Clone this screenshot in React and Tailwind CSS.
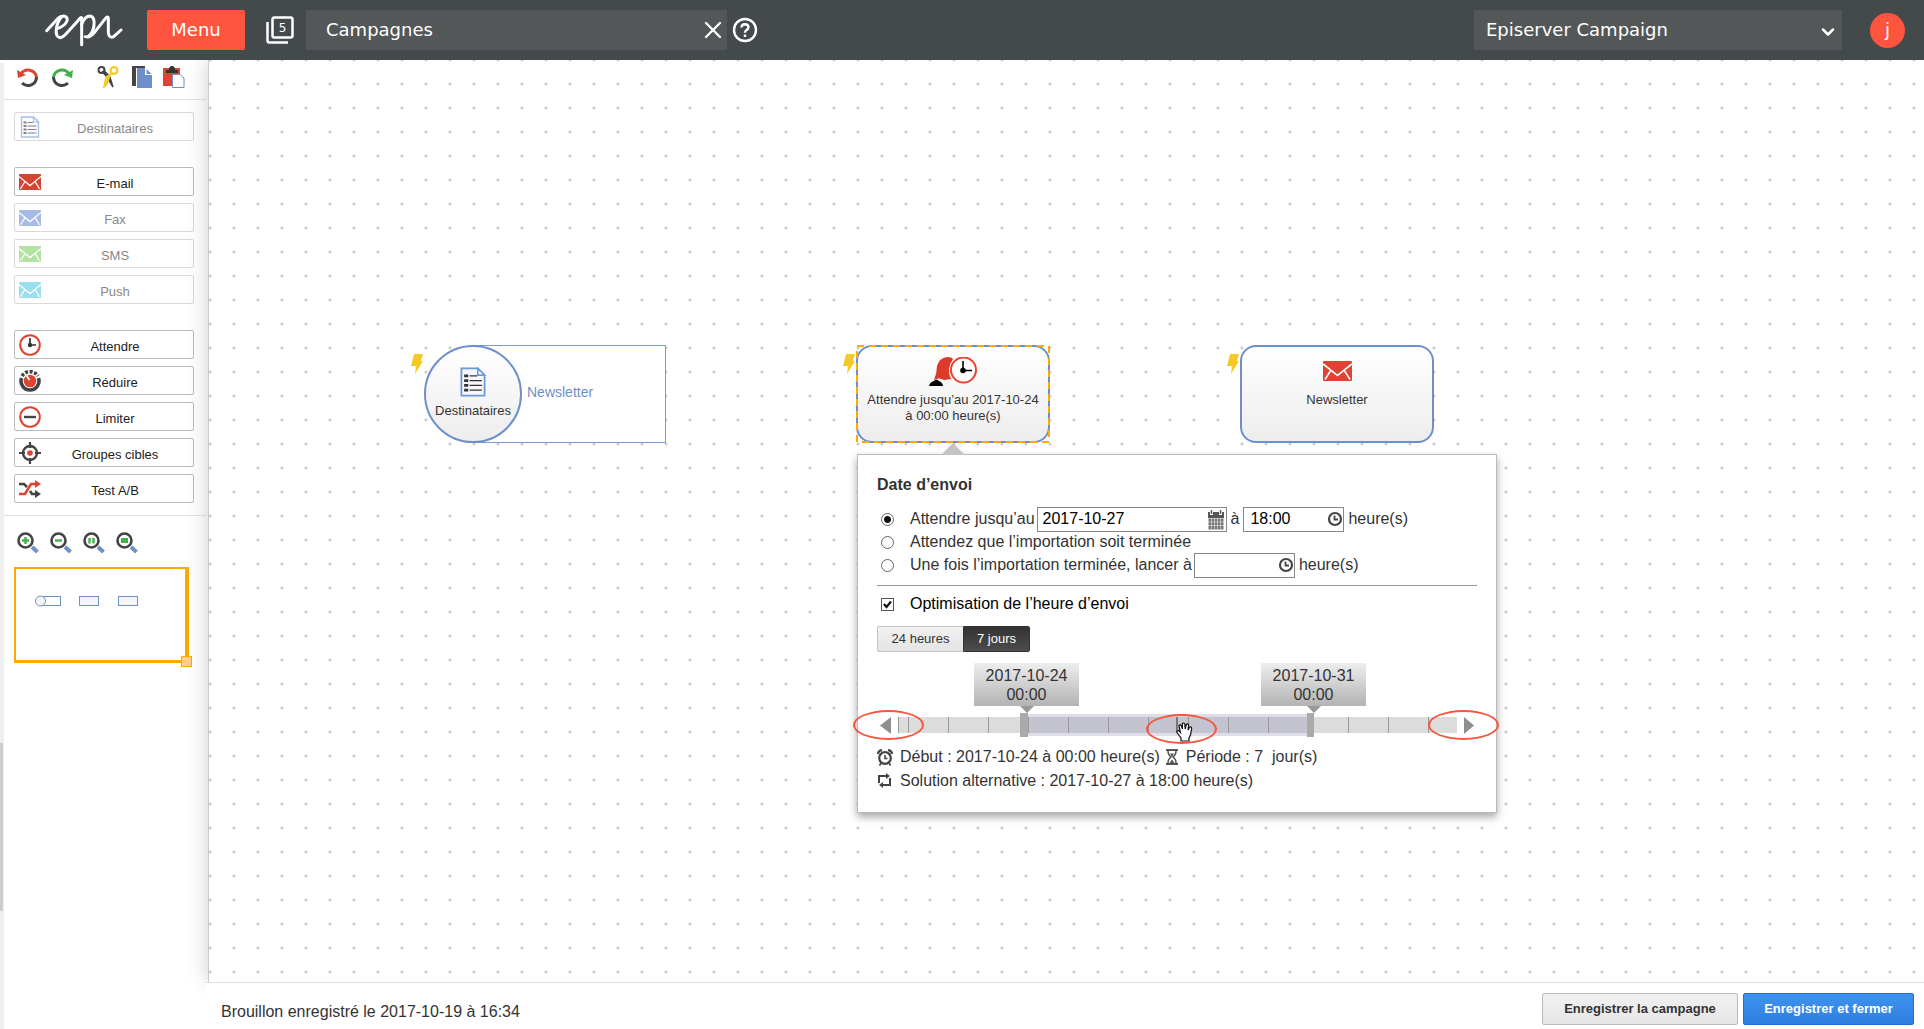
import { useState } from "react";
import { ChevronDown, X } from "lucide-react";

const TICKS = Array.from({ length: 14 }, (_, i) => 10 + i * 40);
const TRACK_WIDTH = 559;

const Logo = () => (
  <svg width="78" height="36" viewBox="0 0 234 108" fill="none" stroke="#fff" strokeWidth="9" strokeLinecap="round" strokeLinejoin="round">
    <path d="M5 56 L38 20 Q46 12 56 12 Q69 14 66 27 Q60 42 36 50" />
    <path d="M50 14 Q37 30 34 50 Q31 76 46 77 Q54 76 62 67 L99 26 Q107 14 110 18 V98" />
    <path d="M110 38 Q118 12 136 12 Q150 16 147 40 Q145 60 130 74" />
    <path d="M121 74 Q134 78 146 64 L181 20 Q189 10 190 20 V62 Q192 80 206 74 L228 54" />
  </svg>
);

const WindowsIcon = () => (
  <svg width="30" height="30" viewBox="0 0 30 30" fill="none" stroke="#fff" strokeWidth="2.5">
    <rect x="7.5" y="2.5" width="20" height="20" rx="2" />
    <path d="M2.500 7 V25.500 Q2.500 27.500 4.500 27.500 H23" />
    <text x="17.500" y="17" fill="#fff" stroke="none" fontSize="12" textAnchor="middle" fontFamily="DejaVu Sans">5</text>
  </svg>
);

const HelpIcon = () => (
  <svg width="26" height="26" viewBox="0 0 26 26" fill="none" stroke="#fff" strokeWidth="2.4">
    <circle cx="13" cy="13" r="11" />
    <path d="M9.500 10.500 Q9.700 7.200 13 7.200 Q16.500 7.300 16.500 10.300 Q16.300 12 14.500 13 Q13 14 13 15.800" />
    <path d="M13 17.500 V20" />
  </svg>
);

const Undo = () => (
  <svg width="22" height="22" viewBox="0 0 22 22" fill="none" strokeWidth="3">
    <path d="M4 8 A8.500 8.500 0 0 1 19.500 11" stroke="#dd4433" />
    <path d="M19.500 11 A8.500 8.500 0 0 1 5 17" stroke="#444" />
    <path d="M0 4 L9 9 L1 12 Z" fill="#dd4433" />
  </svg>
);

const Redo = () => (
  <svg width="22" height="22" viewBox="0 0 22 22" fill="none" strokeWidth="3">
    <path d="M18 8 A8.500 8.500 0 0 0 2.500 11" stroke="#43b049" />
    <path d="M2.500 11 A8.500 8.500 0 0 0 17 17" stroke="#444" />
    <path d="M22 4 L13 9 L21 12 Z" fill="#43b049" />
  </svg>
);

const Cut = () => (
  <svg width="22" height="22" viewBox="0 0 22 22" fill="none">
    <circle cx="4.500" cy="4" r="3" stroke="#444" strokeWidth="2" />
    <circle cx="17" cy="4.500" r="3.400" stroke="#f5c927" strokeWidth="2.200" />
    <path d="M5.500 6 L10 11 L16 21 L12.500 10 L7 5 Z" fill="#444" stroke="#444" strokeWidth="1.500" />
    <path d="M15 7 L9 11 L7 21 L10 18 L13 9 Z" fill="#f5c927" stroke="#f5c927" strokeWidth="1.500" />
  </svg>
);

const Copy = () => (
  <svg width="22" height="22" viewBox="0 0 22 22">
    <path d="M1 0 H14 V2 H5 V20 H1 Z" fill="#444" />
    <path d="M6 2 H14 V9 H21 V22 H6 Z" fill="#6d8fcb" />
    <path d="M15.500 3 L20.500 8 H15.500 Z" fill="#6d8fcb" />
  </svg>
);

const Paste = () => (
  <svg width="22" height="22" viewBox="0 0 22 22">
    <path d="M0 2 H17 V20 H0 Z" fill="#dd4433" />
    <path d="M3 7 V4 H6 Q6 0 9 0 Q12 0 12 4 H15 V7 Z" fill="#333" />
    <path d="M9.500 8.500 H17 L21 12 V21.500 H9.500 Z" fill="#fff" stroke="#6d8fcb" />
  </svg>
);

const ListIcon = ({ size = 22, className }) => (
  <svg width={size} height={size} viewBox="0 0 22 22" className={className} fill="none">
    <path d="M2.500 1 H14.500 L19.500 6 V21 H2.500 Z" fill="#f7f8fb" stroke="#6d98d6" strokeWidth="1.300" />
    <path d="M14.500 1 V6 H19.500 Z" fill="#fff" stroke="#6d98d6" strokeWidth="1.200" />
    <path d="M4.500 6.500 H7.500 M4.500 10 H7.500 M4.500 13.500 H7.500 M4.500 17 H7.500" stroke="#333" strokeWidth="2" />
    <path d="M8.500 6.500 H14 M8.500 10 H17.500 M8.500 13.500 H17.500 M8.500 17 H17.500" stroke="#333" />
  </svg>
);

const Mail = ({ color, className = "w-[22px] h-4" }) => (
  <svg viewBox="0 0 30 20" preserveAspectRatio="none" className={className}>
    <rect width="30" height="20" rx="1" fill={color} />
    <path d="M0 3 L15 14.500 L30 3 M2 18.500 L8 9.500 M28 18.500 L22 9.500" fill="none" stroke="#fff" strokeWidth="1.600" />
  </svg>
);

const ClockIcon = ({ size = 22, hands = "#333" }) => (
  <svg width={size} height={size} viewBox="0 0 22 22" fill="none">
    <circle cx="11" cy="11" r="9.800" fill="#fff" stroke="#dd4433" strokeWidth="2" />
    <path d="M11 4 V11 H17" stroke={hands} strokeWidth="1.700" />
    <circle cx="11" cy="11" r="2.200" fill={hands} />
  </svg>
);

const Knob = () => (
  <svg width="22" height="22" viewBox="0 0 22 22" fill="none">
    <path d="M2.500 8 A9 9 0 1 0 19.500 8" stroke="#444" strokeWidth="3.600" />
    <path d="M3 6 A9.500 9.500 0 0 1 19 6" stroke="#444" strokeWidth="3.600" strokeDasharray="3 1.500" />
    <circle cx="11" cy="11" r="6.300" fill="#dd4433" />
    <path d="M7.500 5.500 L10.500 10" stroke="#fff" strokeWidth="1.800" />
  </svg>
);

const Limit = () => (
  <svg width="22" height="22" viewBox="0 0 22 22" fill="none">
    <circle cx="11" cy="11" r="9.800" fill="#fff" stroke="#dd4433" strokeWidth="2" />
    <path d="M5 11 H17" stroke="#444" strokeWidth="2.400" />
  </svg>
);

const Target = () => (
  <svg width="22" height="22" viewBox="0 0 22 22" fill="none">
    <circle cx="11" cy="11" r="7" stroke="#444" strokeWidth="2.400" />
    <path d="M11 0 V6 M11 16 V22 M0 11 H6 M16 11 H22" stroke="#444" strokeWidth="2.200" />
    <circle cx="11" cy="11" r="2.800" fill="#dd4433" />
  </svg>
);

const Split = () => (
  <svg width="22" height="18" viewBox="0 0 22 18" fill="none" strokeWidth="2.600">
    <path d="M0 4 H5 L8 7 M11 11 L13 14 H17" stroke="#444" />
    <path d="M16 10 L22 14 L16 18 Z" fill="#444" />
    <path d="M0 14 H6 L12 4 H17" stroke="#dd4433" />
    <path d="M16 0 L22 4 L16 8 Z" fill="#dd4433" />
  </svg>
);

const Magnifier = ({ children }) => (
  <svg width="22" height="22" viewBox="0 0 22 22" fill="none">
    <path d="M15 15 L20.500 20" stroke="#6d8fcb" strokeWidth="4" />
    <circle cx="8.500" cy="8.500" r="7" fill="#fff" stroke="#444" strokeWidth="2.600" />
    {children}
  </svg>
);

const Bolt = ({ className }) => (
  <svg width="13" height="20" viewBox="0 0 13 20" className={className}>
    <path d="M3 0 H12 L10 7 H12 L4 20 L5 12 H0 Z" fill="#f5c927" />
  </svg>
);

const Calendar = () => (
  <svg width="16" height="20" viewBox="0 0 16 20">
    <rect x="0.500" y="2.500" width="15" height="17" fill="#777" />
    <path d="M0 2 H16 V8 H0 Z" fill="#555" />
    <path d="M3.500 0 V5 M12.500 0 V5" stroke="#fff" strokeWidth="3" />
    <path d="M3.500 0 V4 M12.500 0 V4" stroke="#555" strokeWidth="1.500" />
    <path d="M0 8.500 H16 M0 12 H16 M0 15.500 H16 M3.500 8 V20 M6.500 8 V20 M9.500 8 V20 M12.500 8 V20" stroke="#fff" strokeWidth="0.500" />
  </svg>
);

const SmallClock = () => (
  <svg width="16" height="18" viewBox="0 0 16 18" fill="none" stroke="#444">
    <circle cx="8" cy="9" r="6" strokeWidth="2.200" />
    <path d="M7.500 5.500 V9.500 H11" strokeWidth="1.800" />
  </svg>
);

const Alarm = () => (
  <svg width="16" height="17" viewBox="0 0 16 17" fill="none" stroke="#444">
    <circle cx="8" cy="9" r="5.800" strokeWidth="2.200" />
    <path d="M8 6 V9.500 H10.500" strokeWidth="1.600" />
    <path d="M0.800 5 Q1.500 1.500 5 1.200 M15.200 5 Q14.500 1.500 11 1.200" strokeWidth="2.200" />
    <path d="M4 14 L2.500 16.500 M12 14 L13.500 16.500" strokeWidth="1.600" />
  </svg>
);

const Hourglass = () => (
  <svg width="12" height="16" viewBox="0 0 12 16" fill="none" stroke="#555">
    <path d="M0 1 H12 M0 15 H12" strokeWidth="2" />
    <path d="M2 2 Q2 6 5 8 Q2 10 2 14 M10 2 Q10 6 7 8 Q10 10 10 14" strokeWidth="1.500" />
    <path d="M4 4.500 H8 L6 8 Z M3.500 14 L6 10.500 L8.500 14 Z" fill="#555" stroke="none" />
  </svg>
);

const Loop = () => (
  <svg width="15" height="15" viewBox="0 0 15 15" fill="none" stroke="#444" strokeWidth="2">
    <path d="M10 3 H2 V10 M5 12 H13 V5" />
    <path d="M9 0 L13 3 L9 6 Z M6 9 L2 12 L6 15 Z" fill="#444" stroke="none" />
  </svg>
);

const Hand = ({ className }) => (
  <svg width="17" height="20" viewBox="0 0 17 20" className={className}>
    <path
      d="M5 19 V16 L1 10.500 Q0.500 8.500 2.500 8.500 L4.500 10.500 L3 4 Q3.500 2 5.200 3.500 L6.500 7 L6.300 2 Q7.300 0 8.800 2 L9.200 7 L10.300 2.500 Q12 1 12.600 3.200 L12 8 L13.800 5 Q15.800 4.500 15.600 6.800 L14.500 13 L13 16 V19 Z"
      fill="#fff"
      stroke="#111"
      strokeWidth="1.200"
    />
  </svg>
);

const Person = () => (
  <svg width="48" height="29" viewBox="0 0 48 29">
    <path d="M8 9 Q10 1 18 0 Q23 0 24 2 Q17 12 22 22 L15 23 Q10 20 5 23 Q8 16 8 9 Z" fill="#dc3b2a" />
    <path d="M0 29 Q1 25 5 24 Q7 21 10 24 Q14 26 14 29 Z" fill="#000" />
    <circle cx="34.500" cy="13" r="12.500" fill="#fff" stroke="#e8432f" strokeWidth="2" />
    <path d="M34 4 V13.500 H43" fill="none" stroke="#000" strokeWidth="1.600" />
    <circle cx="34" cy="13.500" r="2.800" />
  </svg>
);

const SideButton = ({ label, icon, disabled }) => (
  <button
    type="button"
    disabled={disabled}
    className="flex items-center w-[180px] h-[29px] px-1 rounded-xs border border-[#bbb] text-[#222] text-[13px] cursor-pointer disabled:border-[#d9d9d9] disabled:text-[#888] disabled:cursor-default"
  >
    <span className={disabled ? "opacity-60" : ""}>{icon}</span>
    <span className="flex-1 pt-1">{label}</span>
  </button>
);

const Header = () => (
  <header className="relative z-20 flex items-center h-[60px] bg-[#44494c] text-white text-lg font-['DejaVu_Sans',sans-serif]">
    <a href="#" aria-label="Episerver" className="ml-[45px]">
      <Logo />
    </a>
    <button type="button" className="ml-6 w-[98px] h-10 rounded-xs bg-[#ff553e] cursor-pointer">
      Menu
    </button>
    <button type="button" aria-label="Fenêtres" className="ml-5 cursor-pointer">
      <WindowsIcon />
    </button>
    <div className="ml-[11px] flex items-center justify-between w-[421px] h-10 pl-5 bg-[#535758]">
      <span>Campagnes</span>
      <button type="button" aria-label="Fermer" className="cursor-pointer">
        <X size={28} />
      </button>
    </div>
    <button type="button" aria-label="Aide" className="ml-[5px] cursor-pointer">
      <HelpIcon />
    </button>
    <div className="relative ml-auto w-[368px]">
      <select aria-label="Produit" className="appearance-none w-full h-10 pl-3 bg-[#535758] cursor-pointer">
        <option>Episerver Campaign</option>
      </select>
      <ChevronDown size={20} strokeWidth={3} className="absolute right-1 top-3 pointer-events-none" />
    </div>
    <button type="button" className="ml-7 mr-[19px] size-[35px] rounded-full bg-[#ff553e] cursor-pointer">
      j
    </button>
  </header>
);

const MiniMap = () => (
  <div className="relative mt-[13px] ml-[10px] w-[175px] h-24 border-2 border-r-4 border-b-[3px] border-[#ffa800]">
    <svg width="160" height="80" viewBox="0 0 160 80" fill="#f5f5f5" stroke="#6d8fcb" className="block">
      <rect x="24.500" y="27.500" width="20" height="9" fill="#fff" />
      <circle cx="24.500" cy="32" r="5" />
      <rect x="63.500" y="27.500" width="19" height="9" />
      <rect x="102.500" y="27.500" width="19" height="9" />
    </svg>
    <span className="absolute -right-[7px] -bottom-[7px] size-[11px] border border-[#ffa800] bg-[#ffca95]" />
  </div>
);

const Sidebar = () => (
  <aside className="flex flex-none w-[206px] mt-[3px]">
    <div className="flex flex-col w-1 bg-[#efefef]">
      <div className="mt-[680px] w-[3px] h-[168px] bg-[#cdcdcd]" />
    </div>
    <div className="flex-1">
      <div className="flex h-[37px] pt-[3px] pl-[13px] border-b border-[#e2e2e2]">
        <button type="button" aria-label="Annuler" className="self-start"><Undo /></button>
        <button type="button" aria-label="Rétablir" className="self-start ml-3"><Redo /></button>
        <button type="button" aria-label="Couper" className="self-start ml-6"><Cut /></button>
        <button type="button" aria-label="Copier" className="self-start ml-3"><Copy /></button>
        <button type="button" aria-label="Coller" className="self-start ml-[10px]"><Paste /></button>
      </div>
      <div className="pt-3 pl-[10px] pb-3 border-b border-[#e2e2e2]">
        <SideButton label="Destinataires" icon={<ListIcon />} disabled />
        <div className="mt-[26px] flex flex-col gap-[7px]">
          <SideButton label="E-mail" icon={<Mail color="#d44431" />} />
          <SideButton label="Fax" icon={<Mail color="#6d8fd6" />} disabled />
          <SideButton label="SMS" icon={<Mail color="#83cf69" />} disabled />
          <SideButton label="Push" icon={<Mail color="#5acbe0" />} disabled />
        </div>
        <div className="mt-[26px] flex flex-col gap-[7px]">
          <SideButton label="Attendre" icon={<ClockIcon />} />
          <SideButton label="Réduire" icon={<Knob />} />
          <SideButton label="Limiter" icon={<Limit />} />
          <SideButton label="Groupes cibles" icon={<Target />} />
          <SideButton label="Test A/B" icon={<Split />} />
        </div>
      </div>
      <div className="flex gap-[11px] mt-4 pl-[13px]">
        <button type="button" aria-label="Zoom avant">
          <Magnifier><path d="M8.500 5 V12 M5 8.500 H12" stroke="#43b049" strokeWidth="2.400" /></Magnifier>
        </button>
        <button type="button" aria-label="Zoom arrière">
          <Magnifier><path d="M5 8.500 H12" stroke="#43b049" strokeWidth="2.400" /></Magnifier>
        </button>
        <button type="button" aria-label="Taille réelle">
          <Magnifier><path d="M6.500 6 V11.500 M10.500 6 V11.500" stroke="#43b049" strokeWidth="2.400" /></Magnifier>
        </button>
        <button type="button" aria-label="Ajuster">
          <Magnifier><rect x="5" y="6" width="7" height="5" fill="#43b049" /></Magnifier>
        </button>
      </div>
      <MiniMap />
    </div>
  </aside>
);

const Flag = ({ date, className }) => (
  <div className={`absolute top-0 w-[105px] ${className}`}>
    <div className="h-[43px] pt-[3px] text-center leading-[19px] bg-linear-to-b from-[#eee] to-[#b3b3b3]">
      {date}
      <br />
      00:00
    </div>
    <svg width="14" height="7" viewBox="0 0 14 7" className="mx-auto block">
      <path d="M0 0 H14 L7 7 Z" fill="#999" />
    </svg>
  </div>
);

const Ring = ({ className }) => (
  <span className={`absolute w-[71px] h-[30px] rounded-[50%] border-2 border-[#f8553e] pointer-events-none ${className}`} />
);

const Slider = () => (
  <div className="relative mt-[11px] pt-[50px]">
    <Flag date="2017-10-24" className="left-[97px]" />
    <Flag date="2017-10-31" className="left-[384px]" />
    <div className="flex items-center justify-between h-6">
      <button type="button" aria-label="Reculer" className="w-[21px] pl-[3px]">
        <svg width="11" height="17" viewBox="0 0 11 17"><path d="M11 0 V17 L0 8.500 Z" fill="#8f8f8f" /></svg>
      </button>
      <div className="relative flex-1 h-4 bg-[#dcdcdc]">
        <div className="absolute left-[126px] -top-[3px] w-[285px] h-[22px] bg-[#dedeea]" />
        <div className="absolute left-[126px] top-0 w-[285px] h-4 bg-[#c4c3d0]" />
        <div className="absolute left-0 top-0 w-px h-4 bg-[#999]" />
        {TICKS.map((x) => (
          <div
            key={x}
            className="absolute top-0 w-px h-4 bg-[#999]"
            style={{ left: `${(x / TRACK_WIDTH) * 100}%` }}
          />
        ))}
        <div className="absolute left-[122px] -top-1 w-2 h-6 bg-[#aaa]" />
        <div className="absolute left-[409px] -top-1 w-[7px] h-6 bg-[#aaa]" />
        <div className="absolute left-[278px] top-0 w-0.5 h-4 bg-[#777]" />
        <Hand className="absolute left-[278px] top-[5px]" />
      </div>
      <button type="button" aria-label="Avancer" className="w-5 pl-[7px]">
        <svg width="11" height="17" viewBox="0 0 11 17"><path d="M0 0 V17 L10 8.500 Z" fill="#8f8f8f" /></svg>
      </button>
    </div>
    <Ring className="-left-6 top-[47px]" />
    <Ring className="left-[269px] top-[51px]" />
    <Ring className="-right-[22px] top-[47px]" />
  </div>
);

const radioClass =
  "appearance-none flex-none ml-1 mr-3 size-[13px] rounded-full border border-[#666] bg-white checked:bg-[radial-gradient(circle,#111_3px,transparent_4px)]";

const TimeInput = ({ label, value, onChange }) => (
  <div className="relative w-[101px]">
    <input
      type="text"
      aria-label={label}
      value={value}
      onChange={(e) => onChange(e.target.value)}
      className="block w-full h-[25px] pl-[6px] border border-[#888] text-black"
    />
    <span className="absolute right-[1px] top-[3px]"><SmallClock /></span>
  </div>
);

const SendDatePopup = () => {
  const [mode, setMode] = useState("date");
  const [date, setDate] = useState("2017-10-27");
  const [time, setTime] = useState("18:00");
  const [importTime, setImportTime] = useState("");
  const [optimise, setOptimise] = useState(true);

  return (
    <section className="absolute left-[648px] top-[394px] w-[640px] px-[19px] pt-5 pb-5 bg-white border border-[#bbb] shadow-[0_4px_8px_rgba(0,0,0,0.35)] text-base text-[#333]">
      <svg width="24" height="12" viewBox="0 0 24 12" className="absolute left-[83px] -top-3">
        <path d="M12 0 L24 12 H0 Z" fill="#c4c4c4" />
      </svg>
      <h2 className="font-bold leading-5">Date d’envoi</h2>
      <div className="mt-3 flex items-center gap-1 h-6 whitespace-nowrap">
        <input id="m1" type="radio" name="mode" checked={mode === "date"} onChange={() => setMode("date")} className={radioClass} />
        <label htmlFor="m1" className="-mr-0.5">Attendre jusqu’au</label>
        <div className="relative w-[190px]">
          <input
            type="text"
            aria-label="Date"
            value={date}
            onChange={(e) => setDate(e.target.value)}
            className="block w-full h-[25px] pl-[5px] border border-[#888] text-black"
          />
          <span className="absolute right-[3px] top-[3px]"><Calendar /></span>
        </div>
        <span>à</span>
        <TimeInput label="Heure" value={time} onChange={setTime} />
        <span>heure(s)</span>
      </div>
      <div className="flex items-center gap-1 h-[22px]">
        <input id="m2" type="radio" name="mode" checked={mode === "import"} onChange={() => setMode("import")} className={radioClass} />
        <label htmlFor="m2">Attendez que l’importation soit terminée</label>
      </div>
      <div className="flex items-center gap-1 h-6 whitespace-nowrap">
        <input id="m3" type="radio" name="mode" checked={mode === "after"} onChange={() => setMode("after")} className={radioClass} />
        <label htmlFor="m3" className="-mr-0.5">Une fois l’importation terminée, lancer à</label>
        <TimeInput label="Heure de lancement" value={importTime} onChange={setImportTime} />
        <span>heure(s)</span>
      </div>
      <hr className="mt-2 border-[#999]" />
      <div className="mt-2 flex items-center gap-1 h-5 text-black">
        <span className="relative ml-1 mr-3 size-[13px]">
          <input
            id="opt"
            type="checkbox"
            checked={optimise}
            onChange={() => setOptimise(!optimise)}
            className="appearance-none block size-[13px] border border-[#555] bg-white"
          />
          {optimise && (
            <svg width="13" height="13" viewBox="0 0 13 13" className="absolute left-0 top-0 pointer-events-none">
              <path d="M3 6 L5.500 9 L10 3.500" fill="none" stroke="#111" strokeWidth="2.200" />
            </svg>
          )}
        </span>
        <label htmlFor="opt">Optimisation de l’heure d’envoi</label>
      </div>
      <div className="mt-3 flex h-[26px] text-[13px]">
        <button type="button" className="w-[86px] border border-r-0 border-[#c4c4c4] rounded-l-xs bg-linear-to-b from-[#f1f1f1] to-[#e4e4e4]">
          24 heures
        </button>
        <button type="button" className="w-[67px] border border-[#333] rounded-r-xs bg-linear-to-b from-[#333] to-[#4d4d4d] text-white">
          7 jours
        </button>
      </div>
      <Slider />
      <div className="mt-2 flex items-center h-6">
        <span className="w-[23px]"><Alarm /></span>
        <span className="mr-[6px]">Début : 2017-10-24 à 00:00 heure(s)</span>
        <span className="w-5"><Hourglass /></span>
        <span>Période : 7&nbsp; jour(s)</span>
      </div>
      <div className="flex items-center h-[23px]">
        <span className="w-[23px]"><Loop /></span>
        <span>Solution alternative : 2017-10-27 à 18:00 heure(s)</span>
      </div>
    </section>
  );
};

const Canvas = () => (
  <div className="relative flex-1 ml-0.5 border-l border-[#ccc] bg-white bg-[radial-gradient(circle,#ccc_1px,transparent_2px)] bg-[length:24px_24px] bg-[position:-11px_12px] shadow-[0_0_20px_rgba(0,0,0,0.2)] text-[13px] leading-4 text-[#333]">
    <Bolt className="absolute left-[202px] top-[294px]" />
    <div className="absolute left-[263px] top-[285px] w-[194px] h-[98px] border border-[#7d9ad0] bg-white flex items-center pl-[54px] text-sm text-[#6d8fcb]">
      <span className="pb-1">Newsletter</span>
    </div>
    <div className="absolute left-[215px] top-[285px] size-[98px] rounded-full border-2 border-[#6d8fcb] bg-linear-to-b from-white to-[#ededed] flex flex-col items-center pt-5">
      <ListIcon size={30} />
      <span className="mt-[6px]">Destinataires</span>
    </div>

    <Bolt className="absolute left-[634px] top-[294px]" />
    <div className="absolute left-[647px] top-[285px] w-[194px] h-[98px] rounded-2xl border-2 border-[#6d8fcb] bg-linear-to-b from-white to-[#ededed] flex flex-col items-center pt-[10px] text-center">
      <Person />
      <span className="mt-[6px] w-[180px]">Attendre jusqu’au 2017-10-24 à 00:00 heure(s)</span>
    </div>
    <svg width="194" height="98" className="absolute left-[647px] top-[285px] pointer-events-none">
      <rect x="1" y="1" width="192" height="96" fill="none" stroke="#ffa800" strokeWidth="2" strokeDasharray="7 5" />
    </svg>

    <Bolt className="absolute left-[1018px] top-[294px]" />
    <div className="absolute left-[1031px] top-[285px] w-[194px] h-[98px] rounded-2xl border-2 border-[#6d8fcb] bg-linear-to-b from-white to-[#ededed] flex flex-col items-center pt-[14px]">
      <Mail color="#dd4433" className="w-[29px] h-5" />
      <span className="mt-[11px]">Newsletter</span>
    </div>

    <SendDatePopup />
  </div>
);

const Footer = () => (
  <footer className="relative flex items-center h-[47px] pl-[15px] pr-[10px] border-t border-[#ddd] bg-white">
    <p className="pt-3 text-base text-[#333]">Brouillon enregistré le 2017-10-19 à 16:34</p>
    <button type="button" className="ml-auto mt-[6px] w-[196px] h-8 rounded-xs border border-[#bbb] bg-linear-to-b from-[#f1f1f1] to-[#e6e6e6] text-[13px] font-bold text-[#333] cursor-pointer">
      Enregistrer la campagne
    </button>
    <button type="button" className="ml-[5px] mt-[6px] w-[171px] h-8 rounded-xs border border-[#1f6fd0] bg-linear-to-b from-[#3f92f0] to-[#2f7fe0] text-[13px] font-bold text-white cursor-pointer">
      Enregistrer et fermer
    </button>
  </footer>
);

const App = () => {
  return (
    <div className="flex flex-col min-h-screen overflow-hidden bg-white font-['Liberation_Sans',Arial,sans-serif]">
      <Header />
      <div className="flex flex-1">
        <Sidebar />
        <main className="flex flex-col flex-1">
          <Canvas />
          <Footer />
        </main>
      </div>
    </div>
  );
};

export default App;
